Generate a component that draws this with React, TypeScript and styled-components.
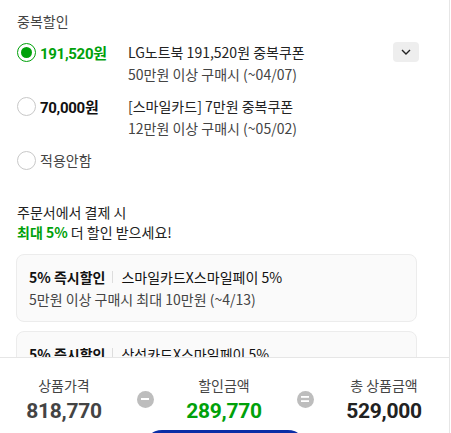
import styled, { createGlobalStyle } from 'styled-components';

const GREEN = '#00a10a';

const GlobalStyle = createGlobalStyle`
	html, body {
		margin: 0;
		padding: 0;
		background: #fff;
	}
	body {
		font-family: 'Noto Sans CJK KR', 'Noto Sans', sans-serif;
		color: #222;
		-webkit-font-smoothing: antialiased;
	}
`;

interface Coupon {
	amount: string;
	title: string;
	condition: string;
	selected?: boolean;
}

const coupons: Coupon[] = [
	{
		amount: '191,520원',
		title: 'LG노트북 191,520원 중복쿠폰',
		condition: '50만원 이상 구매시 (~04/07)',
		selected: true,
	},
	{
		amount: '70,000원',
		title: '[스마일카드] 7만원 중복쿠폰',
		condition: '12만원 이상 구매시 (~05/02)',
	},
];

const cardOffers = [
	{ tag: '5% 즉시할인', name: '스마일카드X스마일페이 5%', desc: '5만원 이상 구매시 최대 10만원 (~4/13)' },
	{ tag: '5% 즉시할인', name: '삼성카드X스마일페이 5%', desc: '5만원 이상 구매시 최대 10만원 (~4/13)' },
];

export default function App() {
	return (
		<>
			<GlobalStyle />
			<Page>
				<ScrollArea>
					<SectionTitle>중복할인</SectionTitle>
					<CouponList>
						{coupons.map((c) => (
							<CouponRow key={c.amount}>
								<RadioLabel>
									<Radio $checked={c.selected} />
									<Amount $checked={c.selected}>{c.amount}</Amount>
								</RadioLabel>
								<CouponInfo>
									<InfoLine>{c.title}</InfoLine>
									<InfoLine>{c.condition}</InfoLine>
								</CouponInfo>
								{c.selected && (
									<ToggleButton aria-label="펼치기">
										<svg width="10" height="6" viewBox="0 0 10 6" fill="none">
											<path d="M1 1l4 4 4-4" stroke="#222" strokeWidth="1.4" />
										</svg>
									</ToggleButton>
								)}
							</CouponRow>
						))}
						<CouponRow>
							<RadioLabel>
								<Radio />
								<NoneLabel>적용안함</NoneLabel>
							</RadioLabel>
						</CouponRow>
					</CouponList>

					<PromoText>
						주문서에서 결제 시
						<br />
						<Highlight>최대 5%</Highlight> 더 할인 받으세요!
					</PromoText>

					<OfferList>
						{cardOffers.map((o) => (
							<OfferCard key={o.name}>
								<OfferHead>
									<OfferTag>{o.tag}</OfferTag>
									<Divider />
									<span>{o.name}</span>
								</OfferHead>
								<OfferDesc>{o.desc}</OfferDesc>
							</OfferCard>
						))}
					</OfferList>
				</ScrollArea>

				<SummaryBar>
					<SummaryGrid>
						<SummaryItem>
							<SummaryLabel>상품가격</SummaryLabel>
							<SummaryValue $color="#444">818,770</SummaryValue>
						</SummaryItem>
						<Operator>
							<svg width="8" height="2" viewBox="0 0 8 2">
								<rect width="8" height="2" fill="#fff" />
							</svg>
						</Operator>
						<SummaryItem>
							<SummaryLabel>할인금액</SummaryLabel>
							<SummaryValue $color={GREEN}>289,770</SummaryValue>
						</SummaryItem>
						<Operator>
							<svg width="8" height="6" viewBox="0 0 8 6">
								<rect width="8" height="1.8" fill="#fff" />
								<rect y="4.2" width="8" height="1.8" fill="#fff" />
							</svg>
						</Operator>
						<SummaryItem>
							<SummaryLabel>총 상품금액</SummaryLabel>
							<SummaryValue $color="#222">529,000</SummaryValue>
						</SummaryItem>
					</SummaryGrid>
					<ApplyButton aria-label="적용하기" />
				</SummaryBar>
			</Page>
		</>
	);
}

const Page = styled.div`
	width: 449px;
	height: 433px;
	overflow: hidden;
	border-right: 1px solid #e6e6e6;
	background: #fff;
	display: flex;
	flex-direction: column;
`;

const ScrollArea = styled.div`
	height: 357px;
	flex-shrink: 0;
	overflow: hidden;
	padding: 10px 30px 0 17px;
	box-sizing: border-box;
`;

const SectionTitle = styled.h3`
	margin: 0;
	font-size: 14px;
	font-weight: 400;
	line-height: 22px;
	color: #444;
`;

const CouponList = styled.div`
	display: flex;
	flex-direction: column;
	gap: 10px;
	margin-top: 9px;
`;

const CouponRow = styled.div`
	display: flex;
	align-items: flex-start;
`;

const RadioLabel = styled.label`
	display: flex;
	align-items: center;
	gap: 4px;
	width: 111px;
	height: 22px;
	flex-shrink: 0;
`;

const Radio = styled.span<{ $checked?: boolean }>`
	box-sizing: border-box;
	width: 19px;
	height: 19px;
	border-radius: 50%;
	border: ${(p) => (p.$checked ? `1.5px solid ${GREEN}` : '1px solid #c8c8c8')};
	display: flex;
	align-items: center;
	justify-content: center;
	background: #fff;

	&::after {
		content: '';
		display: ${(p) => (p.$checked ? 'block' : 'none')};
		width: 11px;
		height: 11px;
		border-radius: 50%;
		background: ${GREEN};
	}
`;

const Amount = styled.span<{ $checked?: boolean }>`
	font-family: Roboto, 'Noto Sans CJK KR', sans-serif;
	font-size: 15px;
	font-weight: 700;
	letter-spacing: -0.3px;
	color: ${(p) => (p.$checked ? GREEN : '#111')};
`;

const NoneLabel = styled.span`
	font-size: 14px;
	color: #444;
`;

const CouponInfo = styled.div`
	display: flex;
	flex-direction: column;
	flex: 1;
`;

const InfoLine = styled.span`
	font-size: 14px;
	line-height: 22px;
	color: #222;

	& + & {
		color: #444;
	}
`;

const ToggleButton = styled.button`
	width: 26px;
	height: 20px;
	margin-top: 1px;
	border: 0;
	border-radius: 4px;
	background: #eeeeee;
	display: flex;
	align-items: center;
	justify-content: center;
	padding: 0;
`;

const PromoText = styled.p`
	margin: 31px 0 0;
	font-size: 14px;
	line-height: 20px;
	color: #222;
`;

const Highlight = styled.strong`
	color: ${GREEN};
	font-weight: 700;
`;

const OfferList = styled.div`
	display: flex;
	flex-direction: column;
	gap: 9px;
	margin-top: 12px;
	margin-left: -1px;
`;

const OfferCard = styled.div`
	box-sizing: border-box;
	width: 401px;
	min-height: 67px;
	padding: 11px 12px;
	border: 1px solid #ececec;
	border-radius: 8px;
	background: #fafafa;
`;

const OfferHead = styled.div`
	display: flex;
	align-items: center;
	font-size: 14px;
	line-height: 22px;
	color: #111;
`;

const OfferTag = styled.span`
	font-weight: 700;
`;

const Divider = styled.span`
	width: 1px;
	height: 12px;
	margin: 0 8px 0 7px;
	background: #ddd;
`;

const OfferDesc = styled.div`
	font-size: 14px;
	line-height: 22px;
	color: #444;
`;

const SummaryBar = styled.div`
	flex: 1;
	min-height: 0;
	overflow: hidden;
	border-top: 1px solid #e6e6e6;
	background: #fff;
	display: flex;
	flex-direction: column;
	align-items: center;
`;

const SummaryGrid = styled.div`
	width: 100%;
	display: grid;
	grid-template-columns: 128px 34px 124px 38px 120px;
	align-items: center;
	padding-top: 17px;
`;

const SummaryItem = styled.div`
	display: flex;
	flex-direction: column;
	align-items: center;
	gap: 4px;
`;

const SummaryLabel = styled.span`
	font-size: 14px;
	line-height: 20px;
	color: #444;
`;

const SummaryValue = styled.span<{ $color: string }>`
	font-family: Roboto, 'Noto Sans CJK KR', sans-serif;
	font-size: 21px;
	font-weight: 700;
	line-height: 24px;
	letter-spacing: -0.3px;
	color: ${(p) => p.$color};
`;

const Operator = styled.span`
	justify-self: center;
	width: 17px;
	height: 17px;
	border-radius: 50%;
	background: #bdbdbd;
	display: flex;
	align-items: center;
	justify-content: center;
`;

const ApplyButton = styled.button`
	flex-shrink: 0;
	margin-top: 7px;
	width: 162px;
	height: 52px;
	border: 0;
	border-radius: 18px;
	background: #0a2ea6;
`;
